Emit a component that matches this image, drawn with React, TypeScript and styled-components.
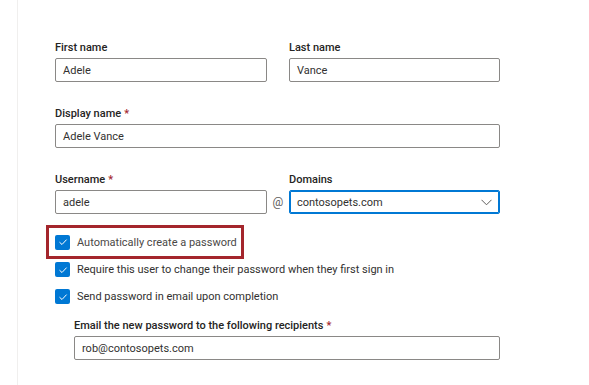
import React from "react";
import styled, { createGlobalStyle } from "styled-components";

const GlobalStyle = createGlobalStyle`
  html, body {
    margin: 0;
    padding: 0;
    background: #ffffff;
  }
  body {
    font-family: "Segoe UI", Roboto, "Liberation Sans", sans-serif;
    color: #323130;
  }
`;

const Page = styled.div`
  width: 589px;
  height: 385px;
  box-sizing: border-box;
  border-left: 1px solid #f0efee;
  margin-left: 17px;
  padding: 39px 0 0 37px;
  overflow: hidden;
`;

const Form = styled.div`
  width: 445px;
  display: flex;
  flex-direction: column;
`;

const Row = styled.div`
  display: flex;
  align-items: flex-end;
  margin-bottom: 23px;
`;

const Field = styled.div<{ $w?: number }>`
  display: flex;
  flex-direction: column;
  width: ${(p) => (p.$w ? `${p.$w}px` : "100%")};
`;

const Label = styled.label`
  font-size: 11px;
  font-weight: 500;
  line-height: 18px;
  height: 18px;
  margin-bottom: 1px;
  color: #252423;
`;

const Req = styled.span`
  color: #a4262c;
  margin-left: 3px;
`;

const Input = styled.div<{ $focus?: boolean }>`
  box-sizing: border-box;
  height: 24px;
  border: 1px solid ${(p) => (p.$focus ? "#0078d4" : "#8a8886")};
  box-shadow: ${(p) => (p.$focus ? "inset 0 0 0 1px #0078d4" : "none")};
  border-radius: 2px;
  padding: 0 7px;
  display: flex;
  align-items: center;
  justify-content: space-between;
  font-size: 11px;
  color: #323130;
`;

const Gap = styled.div`
  width: 22px;
  flex: none;
`;

const At = styled.div`
  width: 22px;
  flex: none;
  height: 24px;
  display: flex;
  align-items: center;
  justify-content: center;
  font-size: 12px;
  color: #605e5c;
`;

const Checks = styled.div`
  display: flex;
  flex-direction: column;
  margin-top: -12px;
  margin-left: -9px;
`;

const Highlight = styled.div`
  align-self: flex-start;
  border: 3px solid #a4262c;
  padding: 4px 4px 4px 6px;
  margin-bottom: -3px;
`;

const CheckRow = styled.div<{ $boxed?: boolean }>`
  display: flex;
  align-items: center;
  height: ${(p) => (p.$boxed ? 20 : 27)}px;
  padding-left: ${(p) => (p.$boxed ? 0 : 9)}px;
  gap: 7px;
  font-size: 11px;
  color: ${(p) => (p.$boxed ? "#4a4846" : "#323130")};
`;

const Box = styled.span`
  width: 15px;
  height: 15px;
  border-radius: 2px;
  background: #0078d4;
  display: flex;
  align-items: center;
  justify-content: center;
  flex: none;
`;

const Indented = styled.div`
  margin-left: 19px;
  margin-top: 7px;
`;

const Check = ({ children }: { children: React.ReactNode }) => (
  <>
    <Box>
      <svg width="10" height="10" viewBox="0 0 10 10" fill="none">
        <path d="M1.5 5.2 L4 7.5 L8.6 2.6" stroke="#fff" strokeWidth="1" />
      </svg>
    </Box>
    <span>{children}</span>
  </>
);

export default function App() {
  return (
    <>
      <GlobalStyle />
      <Page>
        <Form>
          <Row>
            <Field $w={212}>
              <Label>First name</Label>
              <Input>Adele</Input>
            </Field>
            <Gap />
            <Field $w={211}>
              <Label>Last name</Label>
              <Input>Vance</Input>
            </Field>
          </Row>
          <Row>
            <Field>
              <Label>
                Display name<Req>*</Req>
              </Label>
              <Input>Adele Vance</Input>
            </Field>
          </Row>
          <Row>
            <Field $w={212}>
              <Label>
                Username<Req>*</Req>
              </Label>
              <Input>adele</Input>
            </Field>
            <At>@</At>
            <Field $w={211}>
              <Label>Domains</Label>
              <Input $focus>
                contosopets.com
                <svg width="11" height="7" viewBox="0 0 11 7" fill="none">
                  <path d="M0.5 0.8 L5.5 5.8 L10.5 0.8" stroke="#605e5c" strokeWidth="1" />
                </svg>
              </Input>
            </Field>
          </Row>
          <Checks>
            <Highlight>
              <CheckRow $boxed>
                <Check>Automatically create a password</Check>
              </CheckRow>
            </Highlight>
            <CheckRow>
              <Check>Require this user to change their password when they first sign in</Check>
            </CheckRow>
            <CheckRow>
              <Check>Send password in email upon completion</Check>
            </CheckRow>
          </Checks>
          <Indented>
            <Field>
              <Label>
                Email the new password to the following recipients<Req>*</Req>
              </Label>
              <Input>rob@contosopets.com</Input>
            </Field>
          </Indented>
        </Form>
      </Page>
    </>
  );
}
